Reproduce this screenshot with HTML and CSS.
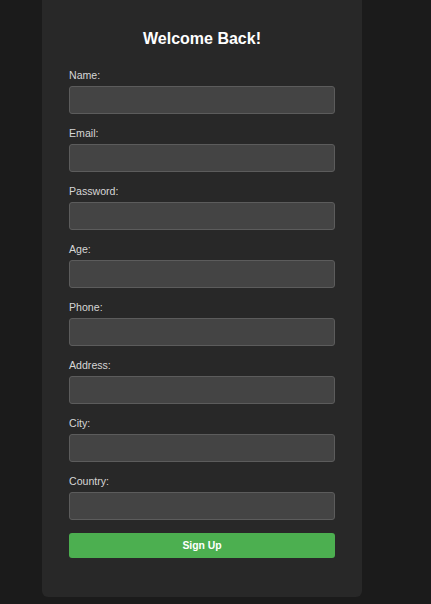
FILE: index.html
```
<!DOCTYPE html>
<html lang="en">
<head>
<meta charset="utf-8">
<title>Welcome Back!</title>
<link rel="stylesheet" href="styles.css">
</head>
<body>
<div class="card">
  <h2 class="title">Welcome Back!</h2>
  <form class="form">
    <div class="group"><label class="label">Name:</label><input class="input" type="text"></div>
    <div class="group"><label class="label">Email:</label><input class="input" type="email"></div>
    <div class="group"><label class="label">Password:</label><input class="input" type="password"></div>
    <div class="group"><label class="label">Age:</label><input class="input" type="text"></div>
    <div class="group"><label class="label">Phone:</label><input class="input" type="text"></div>
    <div class="group"><label class="label">Address:</label><input class="input" type="text"></div>
    <div class="group"><label class="label">City:</label><input class="input" type="text"></div>
    <div class="group"><label class="label">Country:</label><input class="input" type="text"></div>
    <button class="button" type="button">Sign Up</button>
  </form>
</div>
</body>
</html>
```
FILE: styles.css
```
html, body {
  margin: 0;
  padding: 0;
  background: #1b1b1b;
  font-family: "Liberation Sans", Arial, sans-serif;
}
body {
  height: 604px;
  overflow: hidden;
}
.card {
  box-sizing: border-box;
  width: 320px;
  margin-left: 42px;
  margin-top: -10px;
  padding: 40px 27px 39px;
  background: #282828;
  border-radius: 0 0 6px 6px;
}
.title {
  margin: 0 0 21px;
  font-size: 16px;
  line-height: 18px;
  font-weight: bold;
  color: #ffffff;
  text-align: center;
}
.form {
  display: flex;
  flex-direction: column;
  margin: 0;
}
.group {
  display: flex;
  flex-direction: column;
  margin-bottom: 13px;
}
.label {
  font-size: 10.6px;
  line-height: 13px;
  color: #d6d6d6;
  margin-bottom: 4px;
}
.input {
  box-sizing: border-box;
  height: 28px;
  width: 100%;
  margin: 0;
  padding: 0 6px;
  background: #444444;
  border: 1px solid #5c5c5c;
  border-radius: 3px;
  color: #fff;
  outline: none;
}
.button {
  height: 25px;
  width: 100%;
  margin: 0;
  padding: 0;
  border: none;
  border-radius: 3px;
  background: #4caf50;
  color: #ffffff;
  font-family: "Liberation Sans", Arial, sans-serif;
  font-size: 10.4px;
  font-weight: bold;
}
```
